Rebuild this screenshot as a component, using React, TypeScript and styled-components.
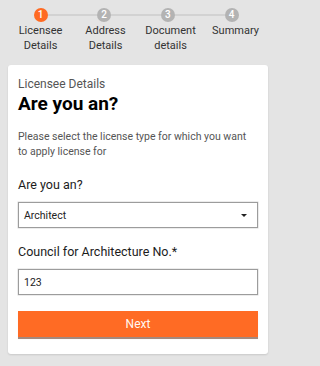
import * as React from 'react'
import styled, {createGlobalStyle} from 'styled-components'

const GlobalStyle = createGlobalStyle`
  html, body {
    margin: 0;
    padding: 0;
    background: #e4e4e4;
  }
  body {
    font-family: Roboto, "Liberation Sans", Arial, sans-serif;
    color: #222;
  }
`

const steps = [
  {n: 1, label: 'Licensee Details'},
  {n: 2, label: 'Address Details'},
  {n: 3, label: 'Document details'},
  {n: 4, label: 'Summary'},
]

const Page = styled.div`
  width: 272px;
  height: 366px;
  overflow: hidden;
`

const Track = styled.div`
  display: flex;
  align-items: center;
  padding: 7.5px 33.5px 0;
`

const Circle = styled.div<{$active?: boolean}>`
  flex: none;
  width: 14px;
  height: 14px;
  border-radius: 50%;
  background: ${p => (p.$active ? '#ff6a22' : '#b3b3b3')};
  color: #fff;
  font-size: 10px;
  font-weight: 500;
  line-height: 14px;
  text-align: center;
`

const Connector = styled.div`
  flex: 1;
  height: 2px;
  background: #d2d2d2;
`

const Labels = styled.div`
  display: grid;
  grid-template-columns: repeat(4, 65px);
  margin: 1.5px 8px 0;
`

const StepLabel = styled.div`
  font-size: 11px;
  line-height: 15px;
  color: #333;
  text-align: center;
  padding: 0 6px;
`

const Card = styled.div`
  margin: 11.5px 4px 0 8px;
  background: #fff;
  border-radius: 3px;
  box-shadow: 0 1px 2px rgba(0, 0, 0, 0.12);
  padding: 12px 10px 17px;
`

const Eyebrow = styled.div`
  font-size: 12px;
  line-height: 15px;
  color: #555;
`

const Title = styled.h1`
  margin: 0;
  font-size: 19px;
  line-height: 24px;
  font-weight: 700;
  color: #000;
`

const Intro = styled.p`
  margin: 13px 0 0;
  font-size: 10.5px;
  line-height: 15.5px;
  color: #555;
`

const Label = styled.div<{$gap: number}>`
  margin-top: ${p => p.$gap}px;
  font-size: 12.5px;
  line-height: 16px;
  color: #1c1c1c;
`

const Box = styled.div`
  margin-top: 9.5px;
  height: 26px;
  box-sizing: border-box;
  border: 1px solid #9c9c9c;
  box-shadow: 0 0 0 0.5px rgba(0, 0, 0, 0.15);
  display: flex;
  align-items: center;
  justify-content: space-between;
  padding: 0 10px 0 5px;
  font-size: 10.5px;
  color: #222;
`

const Caret = styled.span`
  width: 0;
  height: 0;
  border-left: 3px solid transparent;
  border-right: 3px solid transparent;
  border-top: 3.5px solid #222;
`

const NextButton = styled.button`
  display: block;
  width: 100%;
  margin-top: 15.5px;
  height: 26px;
  border: none;
  border-radius: 0;
  background: #ff6b24;
  box-shadow: 0 1.5px 0.5px rgba(90, 40, 20, 0.55);
  color: #fff8f2;
  font-family: Roboto, "Liberation Sans", Arial, sans-serif;
  font-size: 12px;
  font-weight: 400;
  padding: 0;
  cursor: pointer;
`

export default function App() {
  return (
    <Page>
      <GlobalStyle />
      <Track>
        {steps.map((s, i) => (
          <React.Fragment key={s.n}>
            {i > 0 && <Connector />}
            <Circle $active={i === 0}>{s.n}</Circle>
          </React.Fragment>
        ))}
      </Track>
      <Labels>
        {steps.map(s => (
          <StepLabel key={s.n}>{s.label}</StepLabel>
        ))}
      </Labels>
      <Card>
        <Eyebrow>Licensee Details</Eyebrow>
        <Title>Are you an?</Title>
        <Intro>Please select the license type for which you want to apply license for</Intro>
        <Label $gap={17}>Are you an?</Label>
        <Box>
          <span>Architect</span>
          <Caret />
        </Box>
        <Label $gap={15.5}>Council for Architecture No.*</Label>
        <Box>123</Box>
        <NextButton>Next</NextButton>
      </Card>
    </Page>
  )
}
